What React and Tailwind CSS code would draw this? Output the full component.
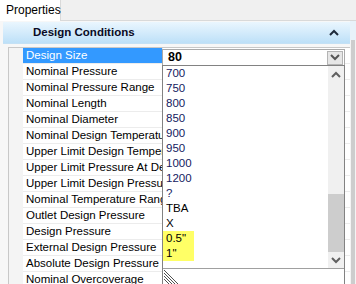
import React from 'react';

const rows = [
  'Design Size',
  'Nominal Pressure',
  'Nominal Pressure Range',
  'Nominal Length',
  'Nominal Diameter',
  'Nominal Design Temperature',
  'Upper Limit Design Temperature',
  'Upper Limit Pressure At Design Temperature',
  'Upper Limit Design Pressure',
  'Nominal Temperature Range',
  'Outlet Design Pressure',
  'Design Pressure',
  'External Design Pressure',
  'Absolute Design Pressure',
  'Nominal Overcoverage',
];

const options = ['700', '750', '800', '850', '900', '950', '1000', '1200', '?', 'TBA', 'X', '0.5"', '1"'];

function Chevron({ up, className }) {
  return (
    <svg width="10" height="7" viewBox="0 0 10 7" className={className}>
      <polyline
        points={up ? '1,6 5,2 9,6' : '1,1 5,5 9,1'}
        fill="none"
        stroke="currentColor"
        strokeWidth="2"
      />
    </svg>
  );
}

export default function App() {
  return (
    <div className="relative w-[356px] h-[284px] overflow-hidden bg-[#f0f0f0] text-[11.5px] text-black font-['Liberation_Sans',Arial,sans-serif]">
      {/* Tab strip */}
      <div className="flex h-[21px]">
        <div className="w-[61px] bg-white border-r border-[#d9d9d9] pl-[6px] pt-[3px] leading-[15px] text-[12px]">Properties</div>
        <div className="flex-1 border-b border-[#d9d9d9]" />
      </div>

      <div className="flex h-[263px] bg-white">
        <div className="flex-1 pl-[3px] pt-[1px] bg-[#f7f7f7]">
          {/* Group header */}
          <div className="flex items-center justify-between h-[22px] pl-[30px] pr-[11px] bg-gradient-to-b from-[#eaf6fe] to-[#bde0f8] border-b border-[#c4e1f5]">
            <span className="font-bold text-[11.5px] text-[#0a0a24]">Design Conditions</span>
            <Chevron up className="text-[#1e2a3a]" />
          </div>

          {/* Grid */}
          <div className="mt-[3px] ml-[5px] border-l border-t border-[#c8c8c8] bg-white">
            {rows.map((r, i) => (
              <div key={r} className="flex h-[16px]">
                <div className="w-[14px] bg-[#f4f4f4]" />
                <div
                  className={`w-[140px] pl-[3px] leading-[15px] whitespace-nowrap overflow-hidden border-b border-r border-[#ececec] ${
                    i === 0 ? 'bg-[#3399ff] text-white' : ''
                  }`}
                >
                  {r}
                </div>
                <div className="flex-1 border-b border-[#ececec]" />
              </div>
            ))}
          </div>
        </div>

        {/* Main scrollbar */}
        <div className="w-[6px] flex flex-col bg-[#f4f4f4]">
          <div className="h-[19px] bg-[#e8f2fa]" />
          <div className="flex-1 w-[4px] ml-[1px] bg-[#cdcdcd]" />
        </div>
      </div>

      {/* Value editor */}
      <div className="absolute left-[162px] top-[49px] w-[183px] h-[17px] bg-white border border-[#a9a9a9] flex items-center">
        <span className="pl-[5px] font-bold text-[12.5px] leading-[15px]">80</span>
        <div className="ml-auto mr-[1px] w-[16px] h-[14px] bg-[#e6e6e6] border border-[#b4b4b4] flex items-center justify-center text-[#555]">
          <Chevron />
        </div>
      </div>

      {/* Dropdown list */}
      <div className="absolute left-[162px] top-[65px] w-[183px] h-[230px] bg-white border border-[#828282] flex flex-col">
        <div className="flex h-[203px] border-b border-[#a0a0a0]">
          <div className="flex-1 flex flex-col">
            {options.map((o, i) => (
              <div key={o} className="h-[15px] leading-[15px] flex">
                <span className={`pl-[3px] pr-[3px] w-[31px] ${i > 10 ? 'bg-[#ffff66]' : ''} ${i > 8 ? 'text-black' : 'text-[#142060]'}`}>{o}</span>
              </div>
            ))}
          </div>
          <div className="w-[16px] bg-[#f0f0f0] flex flex-col items-center">
            <div className="h-[16px] flex items-center justify-center text-[#606060]">
              <Chevron up />
            </div>
            <div className="flex-1 w-full flex flex-col justify-end">
              <div className="h-[58px] w-full bg-[#cdcdcd]" />
            </div>
            <div className="h-[16px] flex items-center justify-center text-[#606060]">
              <Chevron />
            </div>
          </div>
        </div>
        <div className="pl-[1px] pt-[1px]">
          <svg width="14" height="14" viewBox="0 0 14 14">
            {[0, 3, 6, 9].map((d) => (
              <line key={d} x1={0} y1={d} x2={14 - d} y2={14} stroke="#505050" strokeWidth="1" />
            ))}
          </svg>
        </div>
      </div>
    </div>
  );
}
